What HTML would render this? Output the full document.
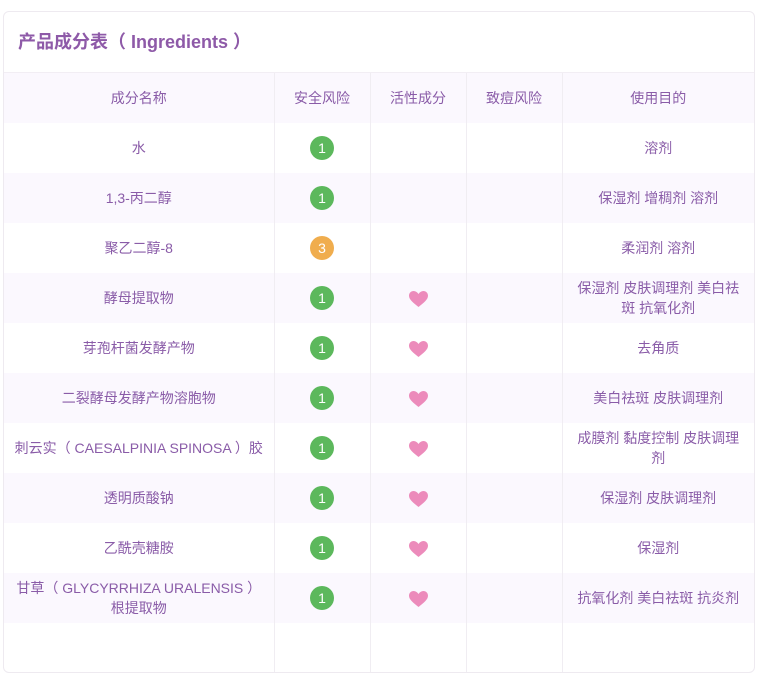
<!DOCTYPE html>
<html><head><meta charset="utf-8"><style>
body{margin:0;background:#fff;font-family:"Liberation Sans","Noto Sans CJK SC",sans-serif;color:#8a5ca8;}
.card{position:absolute;left:3px;top:11px;width:750px;height:660px;border:1px solid #eeeaf0;border-radius:6px;overflow:hidden;background:#fff;}
h1{margin:0;height:60px;line-height:60px;padding-left:14px;font-size:18px;font-weight:bold;color:#8e5aa8;border-bottom:1px solid #f2eef4;}
table{border-collapse:collapse;width:750px;table-layout:fixed;font-size:14px;}
td{height:50px;text-align:center;border-left:1px solid #f0edf2;padding:0 12px;line-height:20px;}
td:first-child{border-left:none;padding:0 8px}
tr:nth-child(odd){background:#fbf8fe}
.b{display:inline-block;width:24px;height:24px;border-radius:12px;background:#5cb85c;color:#fff;line-height:24px;font-size:14px;}
.o{background:#f0ad4e}
svg{vertical-align:middle}
</style></head><body><div class="card"><h1>产品成分表（ Ingredients ）</h1>
<table><colgroup><col style="width:270px"><col style="width:96px"><col style="width:96px"><col style="width:96px"><col></colgroup>
<tr><td>成分名称</td><td>安全风险</td><td>活性成分</td><td>致痘风险</td><td>使用目的</td></tr>
<tr><td>水</td><td><span class="b">1</span></td><td></td><td></td><td>溶剂</td></tr>
<tr><td>1,3-丙二醇</td><td><span class="b">1</span></td><td></td><td></td><td>保湿剂 增稠剂 溶剂</td></tr>
<tr><td>聚乙二醇-8</td><td><span class="b o">3</span></td><td></td><td></td><td>柔润剂 溶剂</td></tr>
<tr><td>酵母提取物</td><td><span class="b">1</span></td><td><svg width="19" height="16" viewBox="0 0 19 16"><path d="M9.5 16C4 11.5 0 8.5 0 4.7 0 2 2 0 4.6 0 6.6 0 8.3 1.2 9.5 3 10.7 1.2 12.4 0 14.4 0 17 0 19 2 19 4.7 19 8.5 15 11.5 9.5 16Z" fill="#ec8bbb"/></svg></td><td></td><td>保湿剂 皮肤调理剂 美白祛斑 抗氧化剂</td></tr>
<tr><td>芽孢杆菌发酵产物</td><td><span class="b">1</span></td><td><svg width="19" height="16" viewBox="0 0 19 16"><path d="M9.5 16C4 11.5 0 8.5 0 4.7 0 2 2 0 4.6 0 6.6 0 8.3 1.2 9.5 3 10.7 1.2 12.4 0 14.4 0 17 0 19 2 19 4.7 19 8.5 15 11.5 9.5 16Z" fill="#ec8bbb"/></svg></td><td></td><td>去角质</td></tr>
<tr><td>二裂酵母发酵产物溶胞物</td><td><span class="b">1</span></td><td><svg width="19" height="16" viewBox="0 0 19 16"><path d="M9.5 16C4 11.5 0 8.5 0 4.7 0 2 2 0 4.6 0 6.6 0 8.3 1.2 9.5 3 10.7 1.2 12.4 0 14.4 0 17 0 19 2 19 4.7 19 8.5 15 11.5 9.5 16Z" fill="#ec8bbb"/></svg></td><td></td><td>美白祛斑 皮肤调理剂</td></tr>
<tr><td>刺云实（ CAESALPINIA SPINOSA ）胶</td><td><span class="b">1</span></td><td><svg width="19" height="16" viewBox="0 0 19 16"><path d="M9.5 16C4 11.5 0 8.5 0 4.7 0 2 2 0 4.6 0 6.6 0 8.3 1.2 9.5 3 10.7 1.2 12.4 0 14.4 0 17 0 19 2 19 4.7 19 8.5 15 11.5 9.5 16Z" fill="#ec8bbb"/></svg></td><td></td><td>成膜剂 黏度控制 皮肤调理剂</td></tr>
<tr><td>透明质酸钠</td><td><span class="b">1</span></td><td><svg width="19" height="16" viewBox="0 0 19 16"><path d="M9.5 16C4 11.5 0 8.5 0 4.7 0 2 2 0 4.6 0 6.6 0 8.3 1.2 9.5 3 10.7 1.2 12.4 0 14.4 0 17 0 19 2 19 4.7 19 8.5 15 11.5 9.5 16Z" fill="#ec8bbb"/></svg></td><td></td><td>保湿剂 皮肤调理剂</td></tr>
<tr><td>乙酰壳糖胺</td><td><span class="b">1</span></td><td><svg width="19" height="16" viewBox="0 0 19 16"><path d="M9.5 16C4 11.5 0 8.5 0 4.7 0 2 2 0 4.6 0 6.6 0 8.3 1.2 9.5 3 10.7 1.2 12.4 0 14.4 0 17 0 19 2 19 4.7 19 8.5 15 11.5 9.5 16Z" fill="#ec8bbb"/></svg></td><td></td><td>保湿剂</td></tr>
<tr><td>甘草（ GLYCYRRHIZA URALENSIS ）<br>根提取物</td><td><span class="b">1</span></td><td><svg width="19" height="16" viewBox="0 0 19 16"><path d="M9.5 16C4 11.5 0 8.5 0 4.7 0 2 2 0 4.6 0 6.6 0 8.3 1.2 9.5 3 10.7 1.2 12.4 0 14.4 0 17 0 19 2 19 4.7 19 8.5 15 11.5 9.5 16Z" fill="#ec8bbb"/></svg></td><td></td><td>抗氧化剂 美白祛斑 抗炎剂</td></tr>
<tr><td></td><td></td><td></td><td></td><td></td></tr>
</table></div></body></html>
